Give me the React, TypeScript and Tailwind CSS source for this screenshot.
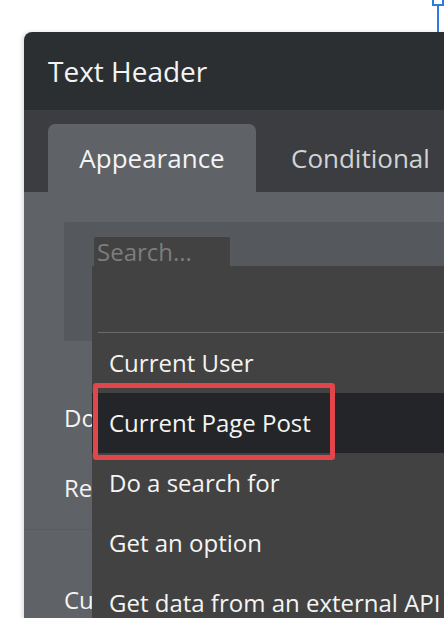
const menuItems = [
  "Current User",
  "Current Page Post",
  "Do a search for",
  "Get an option",
  "Get data from an external API",
];

export default function App() {
  return (
    <div className="relative h-[618px] w-[444px] overflow-hidden bg-white font-['Open_Sans',sans-serif] text-[#f4f4f4]">
      {/* selection handle on the canvas */}
      <div className="absolute right-0 top-0 h-[6px] w-[12px] border-2 border-t-0 border-[#2f7ae0] bg-white" />
      <div className="absolute left-[437px] top-[5px] h-[27px] w-[2px] bg-[#2f7ae0]" />

      <div className="ml-6 mt-8 w-[460px] overflow-hidden rounded-tl-[8px] shadow-[-2px_0_4px_rgba(0,0,0,0.12)]">
        {/* header */}
        <div className="flex h-[78px] items-center bg-[#2c2f32] pl-6 text-[28px]">Text Header</div>

        {/* tabs */}
        <div className="flex h-[82px] items-end bg-[#3b3d40] pl-6">
          <div className="flex h-[68px] w-[208px] items-center justify-center rounded-t-[7px] bg-[#5f6266] text-[26px]">
            Appearance
          </div>
          <div className="flex h-[68px] items-center pl-[35px] text-[26px] text-[#d2d3d4]">Conditional</div>
        </div>

        {/* property body */}
        <div className="h-[440px] bg-[#5f6266] pl-10 pt-[30px] text-[24px]">
          <div className="h-[119px] rounded-[2px] bg-[#55585c]" />
          <div className="mt-[47px] leading-[60px]">Do</div>
          <div className="mt-[10px] leading-[60px]">Re</div>
          <div className="-ml-10 mt-[11px] h-px w-[68px] bg-[#585b5f]" />
          <div className="mt-[40px] leading-[60px]">Cu</div>
        </div>
      </div>

      {/* data source dropdown */}
      <div className="absolute left-[92px] top-[236px] w-[360px]">
        <div className="ml-px h-[30px] w-[138px] rounded-t-[3px] border border-b-0 border-[#57595b] bg-[#424242] pl-[3px] text-[24px] leading-[30px] text-[#7d7d7d]">
          Search...
        </div>
        <div className="bg-[#424242]">
          <div className="h-[67px] pl-1.5 pt-[66px]">
            <div className="h-px bg-[#6b6b6b]" />
          </div>
          {menuItems.map((item, i) => (
            <div
              key={item}
              className={`h-[60px] pl-[17px] text-[24px] leading-[60px] ${i === 1 ? "bg-[#242528]" : ""}`}
            >
              {item}
            </div>
          ))}
        </div>
      </div>

      {/* highlight outline */}
      <div className="absolute left-[93px] top-[383px] h-[77px] w-[242px] rounded-[3px] border-[5px] border-[#e2464b]" />
    </div>
  );
}
